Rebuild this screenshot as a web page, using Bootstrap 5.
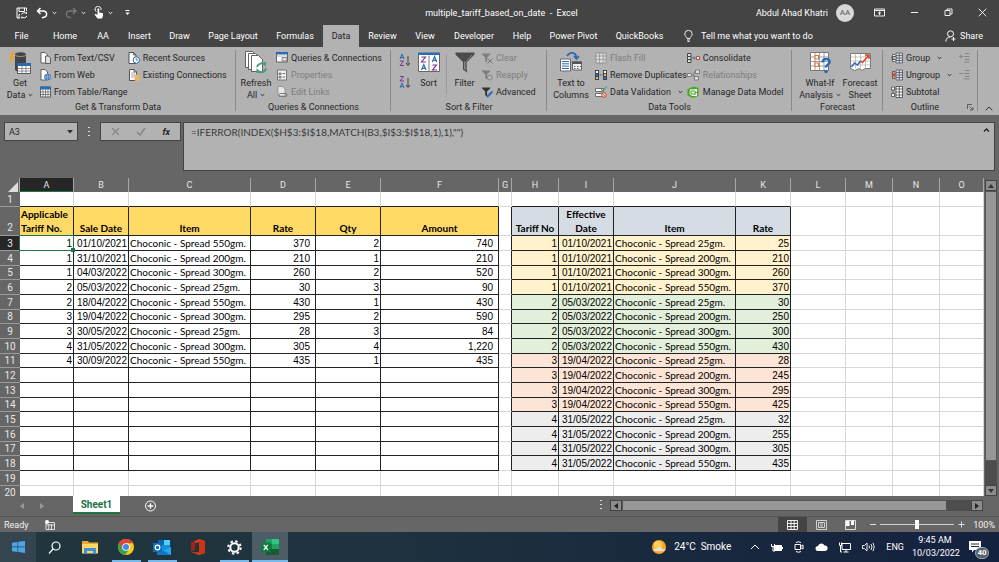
<!DOCTYPE html>
<html lang="en">
<head>
<meta charset="utf-8">
<meta name="viewport" content="width=device-width, initial-scale=1">
<title>multiple_tariff_based_on_date - Excel</title>
<link href="https://cdn.jsdelivr.net/npm/bootstrap@5.3.0/dist/css/bootstrap.min.css" rel="stylesheet">
<style>
:root{--ui:Roboto,"Open Sans",sans-serif;--sheet:Lato,"Open Sans",sans-serif;--digits:"Liberation Sans",Arial,sans-serif;--dark:#444;--mid:#666;--pane:#b2b2b2}
body{font-family:var(--ui);font-size:9px;line-height:12px;background:var(--mid);color:#262626}
button,input,textarea{font:inherit;color:inherit;background:none;border:0;padding:0;margin:0;border-radius:0}
svg{display:block;flex:none}
a{color:inherit;text-decoration:none}
/* title bar */
.titlebar{background:var(--dark);color:#fff;height:25px}
.side{flex:1 1 0}
.avatar{width:18px;height:18px;background:#d8d8d8;color:#555;font-size:8px}
.win-btns{gap:25px}
/* ribbon tabs */
.tabs{background:var(--dark);color:#fff;height:22px}
.tab-grid{display:grid;grid-template-columns:43px 44px 32px 41px 39px 68px 56px 36px 47px 38px 60px 36px 67px 65px}
.tab-grid a{text-align:center;line-height:22px;white-space:nowrap}
.tab-grid a.on{background:var(--pane);color:#262626}
/* ribbon */
.ribbon{background:var(--pane);height:68px;white-space:nowrap}
.rgroup{position:relative;display:flex;flex-direction:column;padding-top:2px}
.rgroup::after{content:"";position:absolute;right:0;top:3px;bottom:4px;width:1px;background:#8a8a8a}
.g1{flex:236 1 0}.g2{flex:155 1 0}.g3{flex:156 1 0}.g4{flex:245 1 0}.g5{flex:91 1 0}.g6{flex:95 1 0}.g7{flex:21 1 0}
.rbody{display:flex;height:51px}
.rlabel{text-align:center;line-height:12px;margin-top:1px}
.big{width:40px;display:flex;flex-direction:column;align-items:center;line-height:12px;padding-top:2px}
.big.slim{width:35px}
.big>svg{height:23px;margin-bottom:3px}
.cap{display:flex;align-items:center;gap:3px}
.stack{display:flex;flex-direction:column}
.sm{height:17px;display:flex;align-items:center;gap:3px;text-align:left}
.off{color:#7d7d7d}
.thin{width:1px;height:40px;margin-top:5px;background:#999}
/* formula row */
.fbar{padding:7px 4px 7px}
.fbox{background:var(--pane);border:1px solid var(--dark);height:19px}
.namebox{width:74px}
.fxbox{width:81px;padding:0 10px}
.formula{height:49px;background:var(--pane);border:1px solid var(--dark);margin-left:2px}
.formula textarea{resize:none;padding:3px 7px;overflow:hidden;color:#3a3a3a;outline:0;font-family:var(--sheet);font-size:10px}
/* worksheet */
.sheetwrap{flex:1 1 0;min-height:0;overflow:hidden}
.gridbox{overflow:hidden;flex:1 1 0;background:#fff}
.xl{table-layout:fixed;border-collapse:separate;border-spacing:0;width:100%;font-family:var(--sheet);color:#000;font-size:10px}
.xl td,.xl th{padding:0 1px;line-height:13px;height:15px;vertical-align:bottom;white-space:nowrap;border:0 solid #d6d6d6;border-width:0 1px 1px 0;font-weight:400}
.xl tr.s td,.xl tr.s th{height:14px}
.xl thead th{background:var(--mid);color:#e6e6e6;text-align:center;height:14px;border-color:#a6a6a6;border-bottom-width:0;font-family:var(--ui);font-size:9px}
.xl tbody th{background:var(--mid);color:#e6e6e6;text-align:center;border-color:#9a9a9a;border-right:0;font-family:var(--ui);font-size:10px}
.xl thead th.sel{background:#262626;box-shadow:inset 0 -1px #217346}
.xl tbody th.sel{background:#262626}
.xl tr.hd td,.xl tr.hd th{height:29px;line-height:14px}
.xl td.k{border-color:#222}
.xl td.kb{border-bottom-color:#222}
.xl td.kr{border-right-color:#222}
.xl td.hy,.xl td.hb{font-weight:700;text-align:center}
.hy{background:#ffd966}.hb{background:#d6dce4}
.t1{background:#fff2cc}.t2{background:#e2efda}.t3{background:#fce4d6}.t4{background:#ededed}
.xl td.n{text-align:right;font-family:var(--digits)}
.xl td.ni{text-align:right;padding-right:5px;font-family:var(--digits)}
.xl td.cur{position:relative}
.xl td.cur::before{content:"";position:absolute;z-index:1;inset:-1px;border:1px solid #217346}
.xl td.cur::after{content:"";position:absolute;z-index:1;right:-2px;bottom:-2px;width:4px;height:4px;background:#217346}
.vscroll{width:15px;padding:2px 2px 0 1px;background:var(--mid)}
.sbtn{background:#8c8c8c;border:1px solid #444;width:12px;height:11px;display:flex;align-items:center;justify-content:center}
.track{background:#4d4d4d}
.thumb{background:#979797;border:1px solid #555}
.vthumb{height:92%}
/* sheet tabs */
.tabsrow{height:20px}
.tabnav{width:73px;padding-left:20px;gap:16px}
.sheettab{width:47px;height:18px;background:#fff;color:#217346;font-weight:700;font-size:10px;border-bottom:2px solid #217346;line-height:17px;text-align:center}
.hscroll{width:373px;height:11px}
.dots{width:2px;height:9px;background:repeating-linear-gradient(#ddd 0 1px,transparent 1px 4px)}
.fbar .dots{margin:5px 10px 0}
/* status bar */
.status{height:16px;border-top:1px solid #555;color:#f0f0f0}
.viewbtn{width:29px;height:15px;display:flex;align-items:center;justify-content:center}
.viewbtn.on{background:#444}
.zoom{appearance:none;width:74px;height:10px;background:linear-gradient(#d0d0d0,#d0d0d0) center/100% 1px no-repeat}
.zoom::-webkit-slider-thumb{appearance:none;width:4px;height:9px;background:#fff}
/* taskbar */
.taskbar{height:30px;background:linear-gradient(90deg,#22363f,#1f333f 35%,#1a2a3e 65%,#14213f);color:#fff}
.tb{width:36px;height:30px;display:flex;align-items:center;justify-content:center;border:solid transparent;border-width:2px 0}
.tb.start{background:#34454f}
.tb.run{background:linear-gradient(#76b9ed,#76b9ed) bottom/29px 2px no-repeat border-box}
.tb.act{background:linear-gradient(#76b9ed,#76b9ed) bottom/100% 2px no-repeat border-box,#4c5d66}
.tray{gap:11px;margin-right:18px}
.weather{font-size:10px}
.badge-n{position:absolute;left:6px;top:6px;width:14px;height:12px;border-radius:6px;background:#555e6b;border:1px solid #9aa;font-size:8px;line-height:10px;text-align:center;font-weight:700}
.clock{width:46px;text-align:center;line-height:13px}
</style>
</head>
<body class="d-flex flex-column vh-100 overflow-hidden">
<svg width="0" height="0" class="position-absolute" aria-hidden="true">
<defs>
<symbol id="chev" viewBox="0 0 5 4"><path d="M.7 1l1.8 1.8L4.300 1" fill="none" stroke="currentColor" stroke-width=".9"/></symbol>
<symbol id="page" viewBox="0 0 12 12"><path d="M1.500.5h4.500l2.500 2.500v8.500h-7z" fill="#fff" stroke="#444" stroke-width=".9"/><path d="M6 .5V3h2.500" fill="none" stroke="#444" stroke-width=".8"/></symbol>
<symbol id="funnel" viewBox="0 0 12 12"><path d="M0 1h9v1L5.500 5.500V11l-2-1.500v-4L0 2z" fill="currentColor"/></symbol>
</defs>
</svg>

<header class="titlebar d-flex align-items-center">
  <div class="side d-flex align-items-center ps-3">
    <button aria-label="Save"><svg width="12" height="12" viewBox="0 0 12 12" fill="none" stroke="#fff"><path d="M4 11H1V1h9.500v3M3 1v3.500h5.500V1M3 11V7.500h1"/><path d="M5.500 7.500a3 3 0 0 1 5-.8V5M10.800 9a3 3 0 0 1-5 .8v1.700"/></svg></button>
    <button class="ms-2" aria-label="Undo"><svg width="12" height="12" viewBox="0 0 12 12" fill="none" stroke="#fff" stroke-width="1.500"><path d="M4.500 1L1.500 4l3 3M1.500 4H7a3 3 0 0 1 1 6.200L6 10.800"/></svg></button>
    <svg class="ms-1" width="5" height="4"><use href="#chev"/></svg>
    <button class="ms-2" aria-label="Redo"><svg width="12" height="12" viewBox="0 0 12 12" fill="none" stroke="#7c7c7c" stroke-width="1.300"><path d="M8 1l3 3-3 3M11 4H5a3 3 0 0 0-1 6.200l2 .6"/></svg></button>
    <svg class="ms-1" width="5" height="4"><use href="#chev"/></svg>
    <button class="ms-2" aria-label="Touch mode"><svg width="10" height="13" viewBox="0 0 10 13"><path d="M2 5.500a3 3 0 1 1 5-1.500" fill="none" stroke="#fff"/><path d="M3.500 2.500h1.700v4l3.800.8v2.500L8 12.500H3.500L.5 8.500l1-.8 2 1.300z" fill="#fff"/></svg></button>
    <svg class="ms-1" width="5" height="4"><use href="#chev"/></svg>
    <button class="ms-2 ps-1" aria-label="Customize toolbar"><svg width="5" height="6" viewBox="0 0 5 6"><path d="M.5.5h4" stroke="#fff"/><path d="M.3 2.500h4.400L2.500 5z" fill="#fff"/></svg></button>
  </div>
  <div>multiple_tariff_based_on_date&nbsp; -&nbsp; Excel</div>
  <div class="side d-flex align-items-center justify-content-end pe-2 me-1">
    <span class="me-2">Abdul Ahad Khatri</span>
    <span class="avatar rounded-circle d-flex align-items-center justify-content-center me-3">AA</span>
    <div class="win-btns d-flex align-items-center ms-1">
    <button aria-label="Ribbon display"><svg width="11" height="9" viewBox="0 0 11 9" fill="none" stroke="#eee"><path d="M.5 1h10v7H.5zM.5 2.500h10M5.500 7V4M4 5.300L5.500 4 7 5.300"/></svg></button>
    <button aria-label="Minimize"><svg width="9" height="9"><path d="M1 4.500h7" stroke="#eee"/></svg></button>
    <button aria-label="Restore"><svg width="9" height="9" viewBox="0 0 9 9" fill="none" stroke="#eee"><path d="M1 2.500h5v5H1zM3 2.500v-1.500h5v5H6"/></svg></button>
    <button aria-label="Close"><svg width="9" height="9" viewBox="0 0 9 9" stroke="#eee"><path d="M.7.7l7.600 7.600M8.300.7L.7 8.300"/></svg></button>
    </div>
  </div>
</header>

<nav class="tabs d-flex">
  <div class="tab-grid">
    <a href="#">File</a><a href="#">Home</a><a href="#">AA</a><a href="#">Insert</a><a href="#">Draw</a><a href="#">Page Layout</a><a href="#">Formulas</a><a href="#" class="on" aria-current="page">Data</a><a href="#">Review</a><a href="#">View</a><a href="#">Developer</a><a href="#">Help</a><a href="#">Power Pivot</a><a href="#">QuickBooks</a>
  </div>
  <a href="#" class="d-flex align-items-center ms-2 ps-1 gap-2"><svg width="9" height="12" viewBox="0 0 9 12" fill="none" stroke="#fff" stroke-width=".9"><path d="M3 8.500C3 7 .8 6.300.8 4a3.700 3.700 0 0 1 7.400 0C8.200 6.300 6 7 6 8.500zM3 10h3M3.500 11.500h2"/></svg>Tell me what you want to do</a>
  <button class="d-flex align-items-center ms-auto me-3 gap-1"><svg width="11" height="12" viewBox="0 0 11 12" fill="none" stroke="#fff"><circle cx="5.500" cy="3.800" r="3"/><path d="M.8 11.500C1 8.500 3 7 5 7M8.500 7v4M6.500 9h4"/></svg>Share</button>
</nav>

<section class="ribbon d-flex" aria-label="Data ribbon">
  <div class="rgroup g1">
    <div class="rbody">
      <button class="big"><svg width="24" height="23" viewBox="0 0 24 23"><path d="M7 3.500c0-3 11-3 11 0V19c-2 2-9 2-11 0z" fill="#444"/><path d="M7 4c1 2 10 2 11 0" fill="none" stroke="#999"/><path d="M5 0L0 8h3L1 14l6-8H4l4-6z" fill="#e8a33d"/><path d="M9.500 12.500h13v10h-13z" fill="#fff" stroke="#555"/><path d="M9 12h14v3H9z" fill="#2b6cb0"/><path d="M10 17.500h13M10 20h13M14 15v8M18 15v8" stroke="#777" stroke-width=".8"/></svg><span>Get</span><span class="cap">Data<svg width="5" height="4"><use href="#chev"/></svg></span></button>
      <div class="stack">
        <button class="sm"><svg width="11" height="12" viewBox="0 0 11 12"><path d="M1 .5h4l2.500 2.500v8H1z" fill="#fff" stroke="#444" stroke-width=".8"/><path d="M5.500 4h3L10.500 6v5.500h-5z" fill="#ddd" stroke="#444" stroke-width=".8"/></svg>From Text/CSV</button>
        <button class="sm"><svg width="11" height="12" viewBox="0 0 11 12"><path d="M1 .5h4l2.500 2.500v8H1z" fill="#fff" stroke="#444" stroke-width=".8"/><circle cx="7.500" cy="8" r="3.300" fill="#2b6cb0"/><path d="M4.500 8h6M7.500 5v6M6 5.500q-1 2.500 0 5M9 5.500q1 2.500 0 5" stroke="#cde" stroke-width=".5" fill="none"/></svg>From Web</button>
        <button class="sm"><svg width="11" height="12" viewBox="0 0 11 12"><path d="M.5 1h10v10H.5z" fill="#fff" stroke="#444" stroke-width=".8"/><path d="M0 .5h11v3H0z" fill="#2b6cb0"/><path d="M.5 6h10M.5 8.500h10M3 3.500V11M5.500 3.500V11M8 3.500V11" stroke="#555" stroke-width=".7"/></svg>From Table/Range</button>
      </div>
      <div class="stack">
        <button class="sm"><svg width="12" height="12" viewBox="0 0 12 12"><use href="#page" x="-.5" width="12" height="12"/><circle cx="8.300" cy="8" r="3.200" fill="#fff" stroke="#2b6cb0"/><path d="M8.300 6v2.200H10" fill="none" stroke="#2b6cb0" stroke-width=".8"/></svg>Recent Sources</button>
        <button class="sm"><svg width="12" height="12" viewBox="0 0 12 12"><use href="#page" width="12" height="12"/><path d="M3 4h4M3 6h4M3 8h3" stroke="#888" stroke-width=".7"/><path d="M6.500 6.500c0-1.500 5-1.500 5 0V11c0 1.300-5 1.300-5 0z" fill="#e8b765"/></svg>Existing Connections</button>
      </div>
    </div>
    <div class="rlabel">Get &amp; Transform Data</div>
  </div>

  <div class="rgroup g2">
    <div class="rbody">
      <button class="big"><svg width="22" height="23" viewBox="0 0 22 23"><g fill="#fff" stroke="#555" stroke-width=".9"><path d="M.5.500h7l3 3v13h-10z"/><path d="M3.500 2.500h7l3 3v13h-10z"/><path d="M6.500 4.500h7l4 4v12h-11z"/></g><path d="M12 16a5 5 0 0 1 8-2.500V11M21 17.500a5 5 0 0 1-8.500 2V22" fill="none" stroke="#4a9a76" stroke-width="2"/></svg><span>Refresh</span><span class="cap">All<svg width="5" height="4"><use href="#chev"/></svg></span></button>
      <div class="stack">
        <button class="sm"><svg width="12" height="11" viewBox="0 0 12 11"><path d="M.5 1h11v9H.5z" fill="#fff" stroke="#666"/><path d="M0 0h12v2.500H0z" fill="#2b6cb0"/><path d="M6 5.500h5V9H6z" fill="#ddd" stroke="#666" stroke-width=".7"/><path d="M1 4h10" stroke="#888" stroke-width=".6"/></svg>Queries &amp; Connections</button>
        <button class="sm off"><svg width="12" height="12" viewBox="0 0 12 12"><path d="M1.500 1h9v10h-9z" fill="#eee" stroke="#777"/><path d="M3 4h2v1.500H3zM3 7.500h2V9H3zM6.500 4.500H9M6.500 8H9" stroke="#555" stroke-width=".8" fill="none"/></svg>Properties</button>
        <button class="sm off"><svg width="12" height="12" viewBox="0 0 12 12"><path d="M2 .5h4.500L9 3v7H2z" fill="#e8e8e8" stroke="#888" stroke-width=".8"/><path d="M3 9a1.500 1.500 0 0 1 1.500-1.500h5a1.500 1.500 0 0 1 0 3h-5A1.500 1.500 0 0 1 3 9z" fill="none" stroke="#777"/></svg>Edit Links</button>
      </div>
    </div>
    <div class="rlabel">Queries &amp; Connections</div>
  </div>

  <div class="rgroup g3">
    <div class="rbody">
      <div class="stack ps-2 pt-1 gap-2">
        <button aria-label="Sort A to Z"><svg width="12" height="14" viewBox="0 0 12 14" fill="none"><path d="M1 6l2-5 2 5M1.700 4.500h2.600" stroke="#2b6cb0"/><path d="M1 8h3.500L1 12.500h4" stroke="#8030a0"/><path d="M9 3v9M7 10l2 2.500 2-2.500" stroke="#444"/></svg></button>
        <button aria-label="Sort Z to A"><svg width="12" height="14" viewBox="0 0 12 14" fill="none"><path d="M1 1.500h3.500L1 6h4" stroke="#8030a0"/><path d="M1 13l2-5 2 5M1.700 11.500h2.600" stroke="#2b6cb0"/><path d="M9 3v9M7 10l2 2.500 2-2.500" stroke="#444"/></svg></button>
      </div>
      <button class="big slim"><svg width="22" height="20" viewBox="0 0 22 20"><path d="M.5 1h21v18H.5z" fill="#fff" stroke="#666"/><path d="M0 0h22v2.500H0z" fill="#2b6cb0"/><path d="M11 3v16" stroke="#777"/><g fill="none" stroke-width="1.200"><path d="M3.500 4.500h4l-4 5h4.500M14.500 12.500h4l-4 5h4.500" stroke="#8030a0"/><path d="M3.500 17.500l2.300-5.500L8 17.500M4.300 15.800h3M14.300 9.500l2.300-5.500 2.200 5.500M15.100 7.800h3" stroke="#2b6cb0"/></g></svg><span>Sort</span></button>
      <div class="thin"></div>
      <button class="big slim"><svg width="20" height="21" viewBox="0 0 20 21"><path d="M.5.5h19v2L12 10v10.500L8 17.500V10L.5 2.500z" fill="#4a4a4a"/><path d="M9.500 9.500V17l1.500 1V9.500l6-6.500" fill="none" stroke="#888"/></svg><span>Filter</span></button>
      <div class="stack">
        <button class="sm off"><svg width="11" height="12"><use href="#funnel" width="11" height="12"/><path d="M5.500 6.500l5 5M10.500 6.500l-5 5" stroke="#777"/></svg>Clear</button>
        <button class="sm off"><svg width="11" height="12"><use href="#funnel" width="11" height="12"/><circle cx="7.800" cy="8.500" r="2.500" fill="#b2b2b2" stroke="#858585"/></svg>Reapply</button>
        <button class="sm"><svg width="11" height="12"><use href="#funnel" width="11" height="12" color="#333"/><path d="M5 11l5.500-5.500" stroke="#2b6cb0" stroke-width="2"/></svg>Advanced</button>
      </div>
    </div>
    <div class="rlabel">Sort &amp; Filter</div>
  </div>

  <div class="rgroup g4">
    <div class="rbody">
      <button class="big ms-1"><svg width="22" height="22" viewBox="0 0 22 22"><path d="M.5 7.500h10v12H.5z" fill="#fff" stroke="#666"/><path d="M2 10h7M2 12.300h7M2 14.600h7M2 17h7" stroke="#2b6cb0"/><path d="M12.500 10.500h9v8h-9z" fill="#eee" stroke="#666"/><path d="M12 10h10v2.500H12z" fill="#555"/><path d="M14 15h1.500M17 15h1.500M20 15h1M14 17h1.500M17 17h1.500" stroke="#666"/><path d="M7 4.500c3-5 9-4 9.500 2M14 4.500l2.500 3 2.500-3" fill="none" stroke="#2b6cb0" stroke-width="1.700"/></svg><span>Text to</span><span>Columns</span></button>
      <div class="stack ms-1">
        <button class="sm off"><svg width="12" height="12" viewBox="0 0 12 12"><path d="M1 1h10v10H1z" fill="#ddd" stroke="#888" stroke-width=".8"/><path d="M1 4h10M1 7.500h6M4.500 1v10M8 1v4" stroke="#888" stroke-width=".7"/><path d="M9 4L6 8h2l-1 3.500L11 7H9z" fill="#aaa"/></svg>Flash Fill</button>
        <button class="sm"><svg width="12" height="12" viewBox="0 0 12 12"><path d="M0 1h4v10H0zM8 1h4v10H8z" fill="#444"/><path d="M1 2h2v2H1zM9 2h2v2H9z" fill="#fff"/><path d="M1 5h2v2H1zM9 8h2v2H9z" fill="#2b6cb0"/><path d="M1 8h2v2H1zM9 5h2v2H9z" fill="#e8b765"/><path d="M4.500 6h3" stroke="#2b6cb0"/></svg>Remove Duplicates</button>
        <button class="sm"><svg width="12" height="12" viewBox="0 0 12 12"><path d="M.5 2.500h8v3h-8zM.5 7.500h7v3h-7z" fill="#fff" stroke="#555" stroke-width=".8"/><path d="M6 3l2 2 3.500-4.500" fill="none" stroke="#4a9a76" stroke-width="1.200"/><circle cx="9" cy="9" r="2.300" fill="#f5d8d0" stroke="#d0442b"/><path d="M7.500 7.500l3 3" stroke="#d0442b" stroke-width=".8"/></svg>Data Validation <svg class="ms-1" width="5" height="4"><use href="#chev"/></svg></button>
      </div>
      <div class="stack">
        <button class="sm"><svg width="13" height="12" viewBox="0 0 13 12"><path d="M.5 1.500H4v9H.5zM.5 4.500H4M.5 7.500H4" fill="#ddd" stroke="#444"/><path d="M5 6h3M7 4.500L8.500 6 7 7.500" fill="none" stroke="#2b6cb0" stroke-width=".9"/><path d="M9.500 4.500h3v3h-3z" fill="#fff" stroke="#d0442b"/></svg>Consolidate</button>
        <button class="sm off"><svg width="13" height="12" viewBox="0 0 13 12"><path d="M.5 4.500h4v3h-4zM8.500 1h4v3.500h-4zM7.500 7.500h4V11h-4z" fill="#ddd" stroke="#777" stroke-width=".9"/><path d="M4.500 6h2.500V3h1.500M7 6v3" fill="none" stroke="#777" stroke-width=".8"/></svg>Relationships</button>
        <button class="sm"><svg width="13" height="12" viewBox="0 0 13 12"><path d="M.5 3L7 .5 11.500 2v8L6 12 .5 9.500z" fill="#4ea52a"/><path d="M3 3.500l7-.5v7H5L2.500 8z" fill="#eef8e8"/><path d="M4 5h4v4M4 5v3h4M8 6.500h2" stroke="#3c8c1c" fill="none" stroke-width=".8"/></svg>Manage Data Model</button>
      </div>
    </div>
    <div class="rlabel">Data Tools</div>
  </div>

  <div class="rgroup g5">
    <div class="rbody ps-1">
      <button class="big ms-1"><svg width="21" height="23" viewBox="0 0 21 23"><path d="M.5 1.500h18v18H.5z" fill="#fff" stroke="#777"/><path d="M.5 6h18M.5 10.500h18M.5 15h18M5 1.500v18M9.500 1.500v18M14 1.500v18" stroke="#888" stroke-width=".8"/><path d="M5 4.500h3.500V8H5zM5 12h3.500v3.500H5z" fill="#fff" stroke="#e07b39" stroke-width="1.200"/><path d="M12.500 11.500c0-5 8-4.500 7 0-.5 2-3.500 2.200-3.500 5" fill="none" stroke="#2b6cb0" stroke-width="2.600"/><circle cx="16" cy="20.500" r="1.800" fill="#2b6cb0"/></svg><span>What-If</span><span class="cap">Analysis<svg width="5" height="4"><use href="#chev"/></svg></span></button>
      <button class="big"><svg width="21" height="21" viewBox="0 0 21 21"><path d="M.5 1.500h20v15H15l-3 2-3-2-4 2-4.500-2z" fill="#fff" stroke="#777"/><path d="M.5 5h20M.5 9h20M.5 13h20M5.500 1.500v15M10.500 1.500v15M15.500 1.500v15" stroke="#aaa" stroke-width=".7"/><path d="M1.500 15l3-4 3 2 3-4" fill="none" stroke="#2b6cb0" stroke-width="1.500"/><path d="M10.500 9l2 1.500L19 3M15 3h4v4" fill="none" stroke="#d0442b" stroke-width="1.500"/></svg><span>Forecast</span><span>Sheet</span></button>
    </div>
    <div class="rlabel">Forecast</div>
  </div>

  <div class="rgroup g6">
    <div class="rbody ps-2">
      <div class="stack">
        <button class="sm"><svg width="12" height="12" viewBox="0 0 12 12"><path d="M5 1h6.500v10H5zM5 3.500h6.500M5 6h6.500M5 8.500h6.500M8.300 1v10" fill="#cfe0f2" stroke="#555" stroke-width=".8"/><path d="M4 2.500H1.500v7H4M1 4.500h4v3H1z" fill="#fff" stroke="#444" stroke-width=".8"/></svg>Group <svg class="ms-1" width="5" height="4"><use href="#chev"/></svg></button>
        <button class="sm"><svg width="12" height="12" viewBox="0 0 12 12"><path d="M5 1h6.500v10H5zM5 3.500h6.500M5 6h6.500M5 8.500h6.500M8.300 1v10" fill="#cfe0f2" stroke="#555" stroke-width=".8"/><path d="M4 2.500H1.500v7H4" fill="none" stroke="#444" stroke-width=".8"/><path d="M.8 4l4 4M4.800 4l-4 4" stroke="#d0442b" stroke-width="1.300"/></svg>Ungroup <svg class="ms-1" width="5" height="4"><use href="#chev"/></svg></button>
        <button class="sm"><svg width="12" height="12" viewBox="0 0 12 12"><path d="M5 .5h6.500v11H5zM5 3h6.500M5 6h6.500M5 9h6.500M8.300.5v11" fill="#fff" stroke="#444" stroke-width=".8"/><path d="M.5 1h3v3h-3zM.5 7.500h3v3h-3zM2 4v3.500" fill="#fff" stroke="#444" stroke-width=".8"/></svg>Subtotal</button>
      </div>
      <div class="stack ms-auto me-2">
        <button class="sm" aria-label="Show detail"><svg width="11" height="11" viewBox="0 0 11 11" stroke="#858585"><path d="M0 4.500h4M2 2.500v4M6 1.500h4.500M5 4.500h5.500M6 7.500h4.500M5 10h5.500"/></svg></button>
        <button class="sm" aria-label="Hide detail"><svg width="11" height="11" viewBox="0 0 11 11" stroke="#858585"><path d="M0 4.500h4M6 1.500h4.500M5 4.500h5.500M6 7.500h4.500M5 10h5.500"/></svg></button>
      </div>
    </div>
    <div class="rlabel d-flex justify-content-end align-items-center pe-1"><span class="me-4 pe-1">Outline</span><button aria-label="Outline settings"><svg width="7" height="7" viewBox="0 0 7 7" fill="none" stroke="#555" stroke-width=".9"><path d="M.5 5V.5H5M2.500 2.500l3.500 3.500M6 3v3H3"/></svg></button></div>
  </div>
  <div class="g7 d-flex align-items-end justify-content-center pb-1"><button aria-label="Collapse ribbon"><svg width="8" height="5" viewBox="0 0 8 5" fill="none" stroke="#333"><path d="M.7 4.300L4 1l3.300 3.300"/></svg></button></div>
</section>

<section class="fbar d-flex" aria-label="Formula bar">
  <div class="fbox namebox d-flex align-items-center pe-1">
    <input class="flex-grow-1 ps-1" size="4" value="A3" aria-label="Name box" id="namebox">
    <button aria-label="Names list"><svg width="6" height="4"><path d="M0 0h6L3 3.500z" fill="#333"/></svg></button>
  </div>
  <div class="dots"></div>
  <div class="fbox fxbox d-flex align-items-center justify-content-between">
    <button aria-label="Cancel"><svg width="9" height="9"><path d="M1 1l7 7M8 1L1 8" stroke="#858585" stroke-width="1.200"/></svg></button>
    <button aria-label="Enter"><svg width="10" height="9" fill="none"><path d="M1 5l3 3 5-7" stroke="#858585" stroke-width="1.500"/></svg></button>
    <button aria-label="Insert function" class="fst-italic fw-bold">fx</button>
  </div>
  <div class="formula d-flex flex-grow-1">
    <textarea class="flex-grow-1" aria-label="Formula" spellcheck="false">=IFERROR(INDEX($H$3:$I$18,MATCH(B3,$I$3:$I$18,1),1),"")</textarea>
    <button class="align-self-start pt-1 pe-1" aria-label="Collapse formula bar"><svg width="7" height="6" viewBox="0 0 7 6" fill="none" stroke="#222" stroke-width="1.300"><path d="M1 4.500L3.500 2 6 4.500"/></svg></button>
  </div>
</section>

<main class="sheetwrap d-flex">
  <div class="gridbox">
    <table class="xl">
      <colgroup><col width="20"><col width="54"><col width="55"><col width="122"><col width="65"><col width="65"><col width="118"><col width="13"><col width="47"><col width="55"><col width="122"><col width="55"><col width="55"><col width="47"><col width="47"><col></colgroup>
      <thead><tr id="letters"></tr></thead>
      <tbody id="cells"></tbody>
    </table>
  </div>
  <div class="vscroll d-flex flex-column">
    <button class="sbtn" aria-label="Scroll up"><svg width="6" height="4"><path d="M0 4h6L3 0z" fill="#333"/></svg></button>
    <div class="track flex-grow-1"><div class="thumb vthumb"></div></div>
    <button class="sbtn" aria-label="Scroll down"><svg width="6" height="4"><path d="M0 0h6L3 4z" fill="#333"/></svg></button>
  </div>
</main>

<section class="tabsrow d-flex align-items-start" aria-label="Sheets">
  <div class="tabnav d-flex align-items-center h-100">
    <button aria-label="Previous sheet"><svg width="4" height="6"><path d="M4 0v6L0 3z" fill="#999"/></svg></button>
    <button aria-label="Next sheet"><svg width="4" height="6"><path d="M0 0v6l4-3z" fill="#999"/></svg></button>
  </div>
  <button class="sheettab">Sheet1</button>
  <button class="ms-4 mt-1" aria-label="New sheet"><svg width="13" height="12" viewBox="0 0 12 12" fill="none" stroke="#fff"><circle cx="6" cy="6" r="5"/><path d="M6 3.300v5.400M3.300 6h5.400" stroke-width="1.300"/></svg></button>
  <div class="dots ms-auto me-2 mt-1"></div>
  <div class="hscroll d-flex me-3 mt-1">
    <button class="sbtn" aria-label="Scroll left"><svg width="4" height="6"><path d="M4 0v6L0 3z" fill="#222"/></svg></button>
    <div class="track flex-grow-1 d-flex"><div class="thumb w-100 me-4"></div></div>
    <button class="sbtn" aria-label="Scroll right"><svg width="4" height="6"><path d="M0 0v6l4-3z" fill="#222"/></svg></button>
  </div>
</section>

<footer class="status d-flex align-items-center">
  <span class="ms-1">Ready</span>
  <button class="ms-3" aria-label="Macro recording"><svg width="10" height="10" viewBox="0 0 10 10"><path d="M1 2.500h8.500v7H1zM1 5h8.500M3.800 4v5.500M6.500 4v5.500" fill="none" stroke="#ddd"/><circle cx="2" cy="2" r="2" fill="#fff"/></svg></button>
  <div class="d-flex ms-auto">
    <button class="viewbtn on" aria-label="Normal view"><svg width="11" height="10" viewBox="0 0 11 10" fill="none" stroke="#fff" stroke-width=".9"><path d="M.5.5h10v9H.5zM.5 3.500h10M.5 6.500h10M4 .5v9M7.200.5v9"/></svg></button>
    <button class="viewbtn" aria-label="Page layout view"><svg width="11" height="10" viewBox="0 0 11 10" fill="none" stroke="#ddd" stroke-width=".9"><path d="M.5.5h10v9H.5zM2.500 2.500H8.500v5h-6zM4 4h3M4 6h3"/></svg></button>
    <button class="viewbtn" aria-label="Page break view"><svg width="11" height="10" viewBox="0 0 11 10"><path d="M.5.5h10v9H.5z" fill="none" stroke="#ddd"/><path d="M1 1h3.500v5H1zM6 1h3v4H6z" fill="#fff"/></svg></button>
  </div>
  <button class="ms-1" aria-label="Zoom out"><svg width="7" height="7"><path d="M1 3.500h6" stroke="#ddd"/></svg></button>
  <input type="range" class="zoom mx-1" min="0" max="200" value="100" aria-label="Zoom">
  <button aria-label="Zoom in"><svg width="7" height="7"><path d="M.5 3.500h6M3.500.5v6" stroke="#ddd"/></svg></button>
  <span class="ms-2 me-1">100%</span>
</footer>

<nav class="taskbar d-flex align-items-center" aria-label="Taskbar">
  <button class="tb start" aria-label="Start"><svg width="13" height="12" viewBox="0 0 13 12" fill="#4ba6ea"><path d="M0 1.700l5.500-.8v4.700H0zM6.200.8L13 0v5.600H6.200zM0 6.300h5.500V11L0 10.200zM6.200 6.300H13V12l-6.800-.9z"/></svg></button>
  <button class="tb" aria-label="Search"><svg width="13" height="13" viewBox="0 0 13 13" fill="none" stroke="#fff" stroke-width="1.200"><circle cx="8" cy="5" r="4"/><path d="M5 8l-4 4.500"/></svg></button>
  <button class="tb" aria-label="File Explorer"><svg width="16" height="14" viewBox="0 0 16 14"><path d="M0 1h6l1 1.500h9V13H0z" fill="#e9a930"/><path d="M0 4h16v9.500H0z" fill="#ffd767"/><path d="M2 8h12v6h-3v-3H5v3H2z" fill="#3a93d8"/></svg></button>
  <button class="tb run" aria-label="Chrome"><svg width="16" height="16" viewBox="0 0 16 16"><circle cx="8" cy="8" r="8" fill="#fbc91c"/><path d="M8 8L1.100 4A8 8 0 0 0 7 15.900L11.500 10z" fill="#35a253"/><path d="M8 4.200H15A8 8 0 0 0 1.100 4L4.700 10 8 8z" fill="#e04437"/><circle cx="8" cy="8" r="3.800" fill="#fff"/><circle cx="8" cy="8" r="3" fill="#4587f0"/></svg></button>
  <button class="tb run" aria-label="Outlook"><svg width="18" height="16" viewBox="0 0 18 16"><path d="M5 1h12v11H5z" fill="#1490df"/><path d="M11 1h6v5h-6z" fill="#50d0ff"/><path d="M5 1h6v5H5z" fill="#0364b8"/><path d="M4 8l7 3.500L18 8v8H4z" fill="#28a8ea"/><path d="M4 8l14 8H4z" fill="#1178c8"/><path d="M0 4h9v9H0z" fill="#0f6cbd"/><circle cx="4.500" cy="8.500" r="2.300" fill="none" stroke="#fff" stroke-width="1.300"/></svg></button>
  <button class="tb" aria-label="Office"><svg width="14" height="16" viewBox="0 0 14 16"><path d="M0 4l8-4 6 2v12l-6 2-8-3 8 .500V3L3.500 4.500v6.500L0 12.500z" fill="#e2401b"/><path d="M8 0l6 2v12l-6 2z" fill="#d13415"/><path d="M0 4l4-2v8.500L0 12.500z" fill="#a81e10"/></svg></button>
  <button class="tb run" aria-label="Settings"><svg width="15" height="15" viewBox="0 0 15 15" fill="none" stroke="#fff"><circle cx="7.500" cy="7.500" r="4.200" stroke-width="2"/><circle cx="7.500" cy="7.500" r="6.200" stroke-width="2" stroke-dasharray="2.400 2.470"/></svg></button>
  <button class="tb act" aria-label="Excel"><svg width="18" height="16" viewBox="0 0 18 16"><path d="M5 0h13v16H5z" fill="#21a366"/><path d="M11 0h7v5h-7z" fill="#33c481"/><path d="M5 5h6v6H5z" fill="#107c41"/><path d="M11 10h7v6H5v-6z" fill="#185c37"/><path d="M0 3.500h9.500V13H0z" fill="#107c41"/><path d="M2.800 5.800l4 5M6.800 5.800l-4 5" stroke="#fff" stroke-width="1.300"/></svg></button>
  <div class="tray d-flex align-items-center ms-auto">
    <button class="weather d-flex align-items-center gap-2 me-2"><svg width="14" height="14" viewBox="0 0 14 14"><circle cx="7" cy="7" r="7" fill="#f9a825"/><circle cx="6" cy="5" r="4" fill="#ffcf5a"/><path d="M1 10c1-2 3-1 4-2s4-1 5 .5 3 0 3.500 1.500c-1 1.500-11 2-12.500 0z" fill="#e6e0d6"/></svg><span>24°C&nbsp; Smoke</span></button>
    <button aria-label="Hidden icons"><svg width="10" height="6" viewBox="0 0 10 6" fill="none" stroke="#fff"><path d="M1 5l4-4 4 4"/></svg></button>
    <button aria-label="Battery"><svg width="12" height="9" viewBox="0 0 12 9"><path d="M3.500 2.500h7v5h-7z" fill="#fff" stroke="#fff"/><path d="M.5 1v2.500h3V1M2 3.500V8h2" fill="none" stroke="#fff"/><path d="M11 4h1v2h-1z" fill="#fff"/></svg></button>
    <button aria-label="Meet now"><svg width="10" height="12" viewBox="0 0 10 12" fill="none" stroke="#fff"><path d="M1 3.500h5.500v5H1zM6.500 5.500L9 4v4L6.500 6.500M2 1.500q2.500-1.500 5 0M2 10.500q2.500 1.500 5 0"/></svg></button>
    <button aria-label="OneDrive"><svg width="13" height="8" viewBox="0 0 13 8"><path d="M3 8a2.500 2.500 0 0 1 0-5A3.500 3.500 0 0 1 9.500 2.500 2.800 2.800 0 0 1 10.500 8z" fill="#fff"/></svg></button>
    <button aria-label="Network"><svg width="12" height="11" viewBox="0 0 12 11" fill="none" stroke="#fff"><path d="M3 1.500h8.500v6H3zM7 7.500V10M4.500 10h5M.5.5v3h2v-3M1.500 3.500V10H3"/></svg></button>
    <button aria-label="Volume"><svg width="13" height="10" viewBox="0 0 13 10" fill="none" stroke="#fff" stroke-width=".9"><path d="M.5 3.500h2L5 1v8L2.500 6.500h-2zM7 3.500q1 1.500 0 3M9 2q2 3 0 6M11 .8q2.500 4.200 0 8.400"/></svg></button>
    <div class="d-flex align-items-center gap-2"><span>ENG</span><span class="clock">9:45 AM<br>10/03/2022</span></div>
    <button class="position-relative" aria-label="Notifications"><svg width="12" height="12" viewBox="0 0 12 12"><path d="M0 0h12v9H5l-2 2.500V9H0z" fill="#fff"/><path d="M2 3h8M2 5.500h8" stroke="#1a2a3e"/></svg><span class="badge-n">40</span></button>
  </div>
</nav>

<script>
const sales = [
  [1,'01/10/2021','Choconic - Spread 550gm.',370,2,'740'],
  [1,'31/10/2021','Choconic - Spread 200gm.',210,1,'210'],
  [1,'04/03/2022','Choconic - Spread 300gm.',260,2,'520'],
  [2,'05/03/2022','Choconic - Spread 25gm.',30,3,'90'],
  [2,'18/04/2022','Choconic - Spread 550gm.',430,1,'430'],
  [3,'19/04/2022','Choconic - Spread 300gm.',295,2,'590'],
  [3,'30/05/2022','Choconic - Spread 25gm.',28,3,'84'],
  [4,'31/05/2022','Choconic - Spread 300gm.',305,4,'1,220'],
  [4,'30/09/2022','Choconic - Spread 550gm.',435,1,'435']
];
const dates = ['01/10/2021','05/03/2022','19/04/2022','31/05/2022'];
const sizes = [25,200,300,550];
const rates = [[25,210,260,370],[30,250,300,430],[28,245,295,425],[32,255,305,435]];
const td = (text, cls) => `<td class="${cls || ''}">${text ?? ''}</td>`;

document.getElementById('letters').innerHTML =
  '<th><svg class="ms-auto" width="10" height="10"><path d="M10 0v10H0z" fill="#ddd"/></svg></th>' +
  [...'ABCDEFGHIJKLMNO'].map((c, i) => `<th scope="col" class="${i ? '' : 'sel'}">${c}</th>`).join('');

let html = '';
for (let r = 1; r <= 20; r++) {
  const small = r > 2 && r % 3 === 2;
  let row = `<tr class="${r === 2 ? 'hd' : small ? 's' : ''}"><th scope="row" class="${r === 3 ? 'sel' : ''}">${r}</th>`;
  if (r === 1) {
    row += td('', 'kb').repeat(6) + td('') + td('', 'kb').repeat(4);
  } else if (r === 2) {
    row += td('Applicable<br>Tariff No.', 'k hy text-start') + ['Sale Date','Item','Rate','Qty','Amount'].map(t => td(t, 'k hy')).join('') +
      td('', 'kr') + ['Tariff No','Effective<br>Date','Item','Rate'].map(t => td(t, 'k hb')).join('');
  } else if (r <= 18) {
    const s = sales[r - 3] || [];
    const g = Math.floor((r - 3) / 4), k = (r - 3) % 4, t = ' t' + (g + 1);
    row += td(s[0], 'k n' + (r === 3 ? ' cur' : '')) + td(s[1], 'k n') + td(s[2], 'k') + td(s[3], 'k ni') + td(s[4], 'k n') + td(s[5], 'k ni') +
      td('', 'kr') + td(g + 1, 'k n' + t) + td(dates[g], 'k n' + t) + td(`Choconic - Spread ${sizes[k]}gm.`, 'k' + t) + td(rates[g][k], 'k n' + t);
  } else {
    row += td('').repeat(11);
  }
  html += row + td('').repeat(4) + '</tr>';
}
document.getElementById('cells').innerHTML = html;
</script>
<script src="https://cdn.jsdelivr.net/npm/bootstrap@5.3.0/dist/js/bootstrap.bundle.min.js"></script>
</body>
</html>
